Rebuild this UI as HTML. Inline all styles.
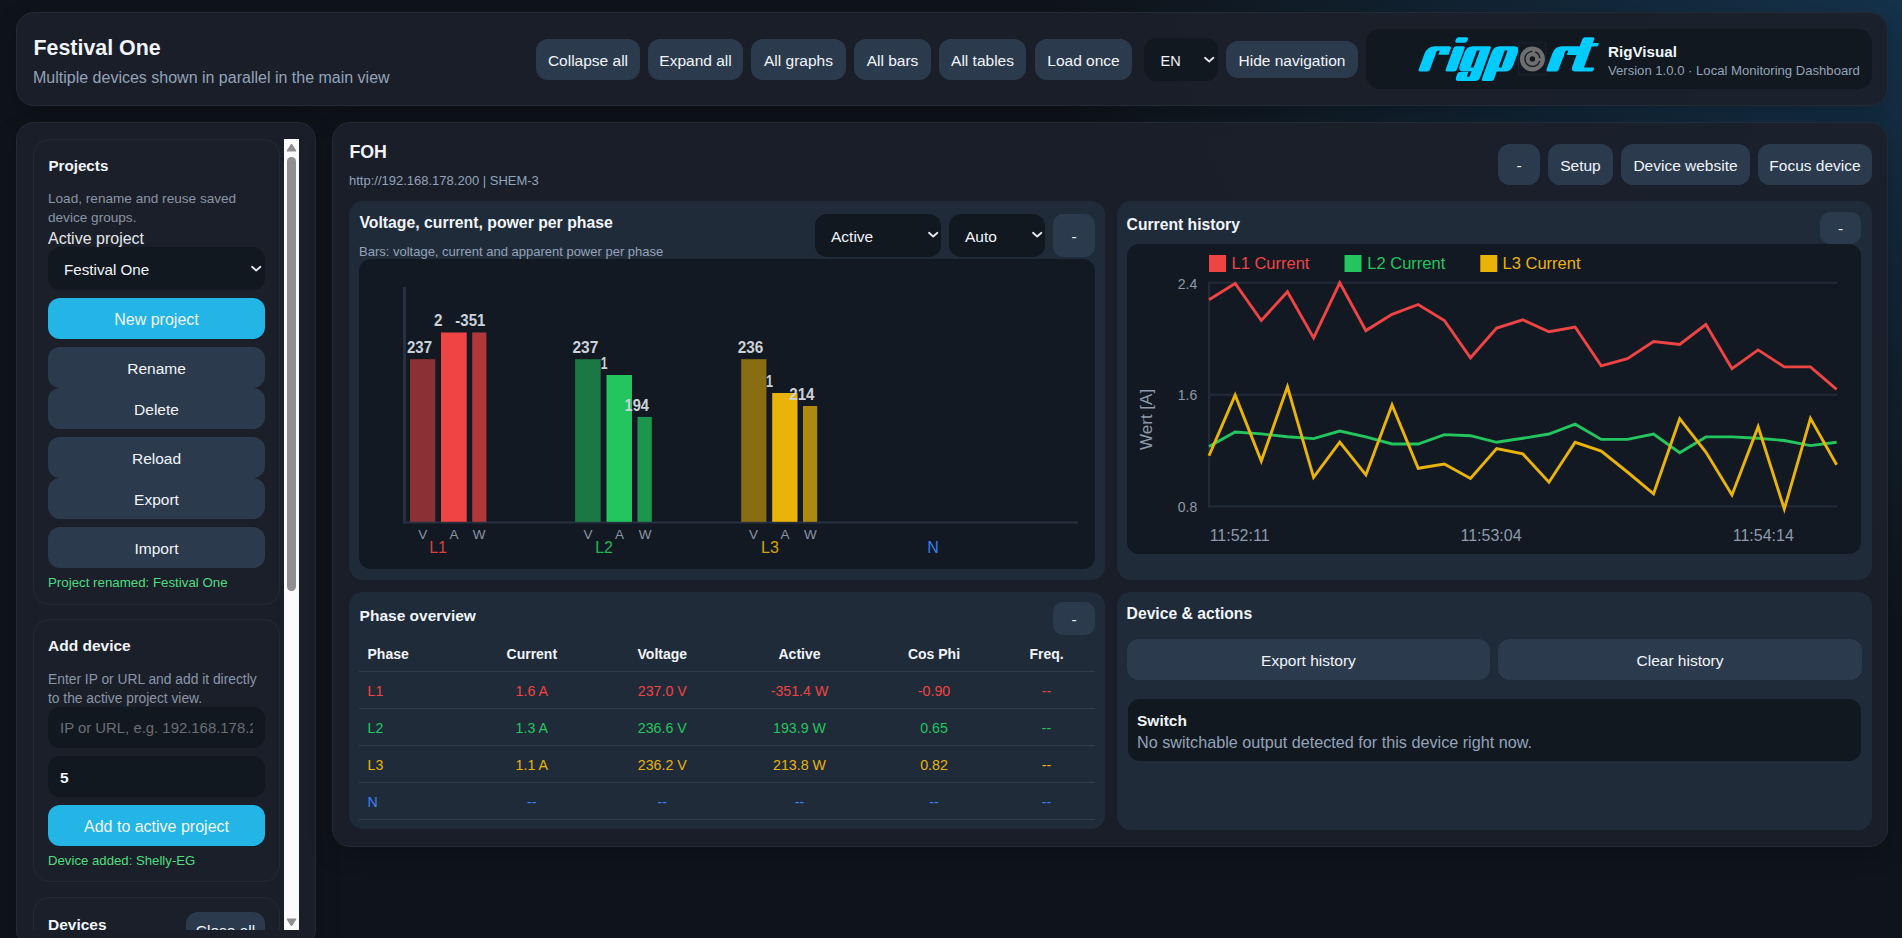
<!DOCTYPE html>
<html><head><meta charset="utf-8"><style>
html,body{margin:0;padding:0;}
body{width:1902px;height:938px;overflow:hidden;position:relative;font-family:"Liberation Sans", sans-serif;
background:radial-gradient(ellipse 850px 620px at 1902px 0px, rgba(25,75,115,0.55), rgba(25,75,115,0) 100%), #0f141a;}
</style></head><body>
<div style="position:absolute;left:16px;top:12px;width:1872px;height:94px;background:rgba(27,32,42,0.92);border-radius:18px;box-sizing:border-box;border:1px solid #222b36;box-shadow:0 8px 24px rgba(0,0,0,0.18);"></div>
<div style="position:absolute;left:33.5px;top:38.28px;font-size:21.4px;line-height:21.4px;font-weight:700;color:#f1f5f9;white-space:nowrap;">Festival One</div>
<div style="position:absolute;left:33px;top:70.26px;font-size:16px;line-height:16px;font-weight:400;color:#94a3b8;white-space:nowrap;">Multiple devices shown in parallel in the main view</div>
<div style="position:absolute;left:536px;top:39px;width:104px;height:41px;background:#2c3a4e;border-radius:12px;"></div>
<div style="position:absolute;left:188.0px;width:800px;text-align:center;top:53.38px;font-size:15.5px;line-height:15.5px;font-weight:400;color:#f1f5f9;white-space:nowrap;">Collapse all</div>
<div style="position:absolute;left:648px;top:39px;width:95px;height:41px;background:#2c3a4e;border-radius:12px;"></div>
<div style="position:absolute;left:295.5px;width:800px;text-align:center;top:53.38px;font-size:15.5px;line-height:15.5px;font-weight:400;color:#f1f5f9;white-space:nowrap;">Expand all</div>
<div style="position:absolute;left:751px;top:39px;width:95px;height:41px;background:#2c3a4e;border-radius:12px;"></div>
<div style="position:absolute;left:398.5px;width:800px;text-align:center;top:53.38px;font-size:15.5px;line-height:15.5px;font-weight:400;color:#f1f5f9;white-space:nowrap;">All graphs</div>
<div style="position:absolute;left:854px;top:39px;width:77px;height:41px;background:#2c3a4e;border-radius:12px;"></div>
<div style="position:absolute;left:492.5px;width:800px;text-align:center;top:53.38px;font-size:15.5px;line-height:15.5px;font-weight:400;color:#f1f5f9;white-space:nowrap;">All bars</div>
<div style="position:absolute;left:939px;top:39px;width:87px;height:41px;background:#2c3a4e;border-radius:12px;"></div>
<div style="position:absolute;left:582.5px;width:800px;text-align:center;top:53.38px;font-size:15.5px;line-height:15.5px;font-weight:400;color:#f1f5f9;white-space:nowrap;">All tables</div>
<div style="position:absolute;left:1035px;top:39px;width:97px;height:41px;background:#2c3a4e;border-radius:12px;"></div>
<div style="position:absolute;left:683.5px;width:800px;text-align:center;top:53.38px;font-size:15.5px;line-height:15.5px;font-weight:400;color:#f1f5f9;white-space:nowrap;">Load once</div>
<div style="position:absolute;left:1144px;top:38px;width:74px;height:43px;background:#111820;border-radius:12px;"></div>
<div style="position:absolute;left:1160.5px;top:54.23px;font-size:14.5px;line-height:14.5px;font-weight:400;color:#f1f5f9;white-space:nowrap;">EN</div>
<svg style="position:absolute;left:1203.3px;top:53.3px" width="12.4" height="12.4"><path d="M2 4.73 L6.2 8.510000000000002 L10.4 4.73" fill="none" stroke="#e5e7eb" stroke-width="1.8" stroke-linecap="round" stroke-linejoin="round"/></svg>
<div style="position:absolute;left:1226px;top:41px;width:132px;height:37px;background:#2c3a4e;border-radius:12px;"></div>
<div style="position:absolute;left:892px;width:800px;text-align:center;top:53.38px;font-size:15.5px;line-height:15.5px;font-weight:400;color:#f1f5f9;white-space:nowrap;">Hide navigation</div>
<div style="position:absolute;left:1366px;top:29px;width:506px;height:60px;background:#111820;border-radius:14px;"></div>
<div style="position:absolute;left:1608px;top:44.13px;font-size:15.2px;line-height:15.2px;font-weight:700;color:#f1f5f9;white-space:nowrap;">RigVisual</div>
<div style="position:absolute;left:1608px;top:63.61px;font-size:13.1px;line-height:13.1px;font-weight:400;color:#94a3b8;white-space:nowrap;">Version 1.0.0 · Local Monitoring Dashboard</div>
<svg style="position:absolute;left:1400px;top:30px" width="230" height="60"><g transform="skewX(-20)"><path d="M 33.08,39.60 L 33.08,24.20 Q 33.08,16.20 41.08,16.20 L 55.08,16.20 Q 57.58,16.20 57.58,18.70 L 57.58,24.80 L 47.58,24.80 Q 44.38,24.80 44.38,28.00 L 44.38,39.60 Q 44.38,41.60 42.38,41.60 L 35.08,41.60 Q 33.08,41.60 33.08,39.60 Z" fill="#00ccff"/><rect x="44.38" y="20.50" width="3.00" height="5.50" rx="1.2" fill="#111820"/><rect x="60.08" y="16.20" width="11.20" height="25.40" rx="2" fill="#00ccff"/><rect x="59.28" y="7.20" width="12.00" height="5.50" rx="2" fill="#00ccff"/><path d="M 72.68,35.60 L 72.68,22.20 Q 72.68,16.20 78.68,16.20 L 95.08,16.20 Q 97.48,16.20 97.48,18.60 L 97.48,47.00 Q 97.48,51.00 93.48,51.00 L 77.08,51.00 Q 73.28,51.00 73.28,47.00 L 73.28,43.50 Q 73.28,42.00 74.78,42.00 L 83.68,42.00 L 83.68,41.60 L 78.68,41.60 Q 72.68,41.60 72.68,35.60 Z" fill="#00ccff"/><rect x="84.28" y="20.50" width="3.00" height="17.10" rx="0" fill="#111820"/><rect x="83.68" y="41.20" width="2.80" height="5.60" rx="0" fill="#111820"/><path d="M 99.68,41.60 L 99.68,22.20 Q 99.68,16.20 105.68,16.20 L 120.08,16.20 Q 126.08,16.20 126.08,22.20 L 126.08,35.60 Q 126.08,41.60 120.08,41.60 L 111.88,41.60 L 111.88,49.00 Q 111.88,51.00 109.88,51.00 L 101.68,51.00 Q 99.68,51.00 99.68,49.00 Z" fill="#00ccff"/><rect x="112.18" y="20.50" width="2.90" height="17.10" rx="0" fill="#111820"/><path d="M 160.88,39.60 L 160.88,23.20 Q 160.88,16.20 167.88,16.20 L 186.58,16.20 L 186.58,24.90 L 176.08,24.90 Q 173.08,24.90 173.08,28.00 L 173.08,39.60 Q 173.08,41.60 171.08,41.60 L 162.88,41.60 Q 160.88,41.60 160.88,39.60 Z" fill="#00ccff"/><rect x="173.08" y="20.40" width="2.80" height="5.60" rx="1.2" fill="#111820"/><path d="M 185.68,36.60 L 185.68,9.20 Q 185.68,7.20 187.68,7.20 L 195.58,7.20 Q 197.58,7.20 197.58,9.20 L 197.58,13.00 L 202.58,13.00 Q 203.88,13.00 203.88,14.30 L 203.88,15.10 Q 203.88,16.40 202.58,16.40 L 197.58,16.40 L 197.58,37.40 L 206.58,37.40 Q 208.08,37.40 208.08,38.90 L 208.08,40.20 Q 208.08,41.60 206.58,41.60 L 190.68,41.60 Q 185.68,41.60 185.68,36.60 Z" fill="#00ccff"/></g><rect x="118.5" y="13" width="27.3" height="31.7" fill="none" stroke="#1d2530" stroke-width="1"/><circle cx="132.4000000000001" cy="28.9" r="12.5" fill="#6e6e6e"/><circle cx="132.4000000000001" cy="28.9" r="7.5" fill="none" stroke="#111820" stroke-width="1.3" stroke-dasharray="33 3 8 3" stroke-dashoffset="-2"/><circle cx="132.4000000000001" cy="28.9" r="2.7" fill="#111820"/></svg>
<div style="position:absolute;left:16px;top:122px;width:300px;height:826px;background:rgba(27,32,42,0.92);border-radius:18px;box-sizing:border-box;border:1px solid #222b36;box-shadow:0 8px 24px rgba(0,0,0,0.18);"></div>
<div style="position:absolute;left:0;top:139px;width:284px;height:791px;overflow:hidden;">
<div style="position:absolute;left:33px;top:0px;width:247px;height:466px;background:#1a1f29;border-radius:16px;box-sizing:border-box;border:1px solid #222a35;"></div>
<div style="position:absolute;left:48.4px;top:19.13px;font-size:15.2px;line-height:15.2px;font-weight:700;color:#f1f5f9;white-space:nowrap;">Projects</div>
<div style="position:absolute;left:48px;top:53.49px;font-size:13.6px;line-height:13.6px;font-weight:400;color:#8b95a7;white-space:nowrap;">Load, rename and reuse saved</div>
<div style="position:absolute;left:48px;top:72.49px;font-size:13.6px;line-height:13.6px;font-weight:400;color:#8b95a7;white-space:nowrap;">device groups.</div>
<div style="position:absolute;left:48px;top:91.76px;font-size:16px;line-height:16px;font-weight:400;color:#e5e7eb;white-space:nowrap;">Active project</div>
<div style="position:absolute;left:48px;top:108px;width:217px;height:43px;background:#111820;border-radius:12px;"></div>
<div style="position:absolute;left:64px;top:123.13px;font-size:15.2px;line-height:15.2px;font-weight:400;color:#f1f5f9;white-space:nowrap;">Festival One</div>
<div style="position:absolute;left:48px;top:159px;width:217px;height:41px;background:#22b5e5;border-radius:12px;"></div>
<div style="position:absolute;left:-243.5px;width:800px;text-align:center;top:172.76px;font-size:16px;line-height:16px;font-weight:400;color:#f1f5f9;white-space:nowrap;">New project</div>
<div style="position:absolute;left:48px;top:208px;width:217px;height:41px;background:#2c3a4e;border-radius:12px;"></div>
<div style="position:absolute;left:-243.5px;width:800px;text-align:center;top:221.88px;font-size:15.5px;line-height:15.5px;font-weight:400;color:#f1f5f9;white-space:nowrap;">Rename</div>
<div style="position:absolute;left:48px;top:249px;width:217px;height:41px;background:#2c3a4e;border-radius:12px;"></div>
<div style="position:absolute;left:-243.5px;width:800px;text-align:center;top:262.88px;font-size:15.5px;line-height:15.5px;font-weight:400;color:#f1f5f9;white-space:nowrap;">Delete</div>
<div style="position:absolute;left:48px;top:298px;width:217px;height:41px;background:#2c3a4e;border-radius:12px;"></div>
<div style="position:absolute;left:-243.5px;width:800px;text-align:center;top:311.88px;font-size:15.5px;line-height:15.5px;font-weight:400;color:#f1f5f9;white-space:nowrap;">Reload</div>
<div style="position:absolute;left:48px;top:339px;width:217px;height:41px;background:#2c3a4e;border-radius:12px;"></div>
<div style="position:absolute;left:-243.5px;width:800px;text-align:center;top:352.88px;font-size:15.5px;line-height:15.5px;font-weight:400;color:#f1f5f9;white-space:nowrap;">Export</div>
<div style="position:absolute;left:48px;top:388px;width:217px;height:41px;background:#2c3a4e;border-radius:12px;"></div>
<div style="position:absolute;left:-243.5px;width:800px;text-align:center;top:401.88px;font-size:15.5px;line-height:15.5px;font-weight:400;color:#f1f5f9;white-space:nowrap;">Import</div>
<div style="position:absolute;left:48px;top:436.74px;font-size:13.3px;line-height:13.3px;font-weight:400;color:#4ade80;white-space:nowrap;">Project renamed: Festival One</div>
<div style="position:absolute;left:33px;top:480px;width:247px;height:263px;background:#1a1f29;border-radius:16px;box-sizing:border-box;border:1px solid #222a35;"></div>
<div style="position:absolute;left:48px;top:498.88px;font-size:15.5px;line-height:15.5px;font-weight:700;color:#f1f5f9;white-space:nowrap;">Add device</div>
<div style="position:absolute;left:48px;top:534.22px;font-size:13.8px;line-height:13.8px;font-weight:400;color:#8b95a7;white-space:nowrap;">Enter IP or URL and add it directly</div>
<div style="position:absolute;left:48px;top:553.02px;font-size:13.8px;line-height:13.8px;font-weight:400;color:#8b95a7;white-space:nowrap;">to the active project view.</div>
<div style="position:absolute;left:48px;top:568px;width:217px;height:41px;background:#111820;border-radius:12px;"></div>
<div style="position:absolute;left:60px;top:582.39px;width:193.3px;overflow:hidden;font-size:14.9px;line-height:14.9px;color:#6b6e74;white-space:nowrap;">IP or URL, e.g. 192.168.178.200</div>
<div style="position:absolute;left:48px;top:617px;width:217px;height:41px;background:#111820;border-radius:12px;"></div>
<div style="position:absolute;left:60px;top:630.88px;font-size:15.5px;line-height:15.5px;font-weight:700;color:#f1f5f9;white-space:nowrap;">5</div>
<div style="position:absolute;left:48px;top:666px;width:217px;height:41px;background:#22b5e5;border-radius:12px;"></div>
<div style="position:absolute;left:-243.5px;width:800px;text-align:center;top:680.26px;font-size:16px;line-height:16px;font-weight:400;color:#f1f5f9;white-space:nowrap;">Add to active project</div>
<div style="position:absolute;left:48px;top:714.83px;font-size:13.2px;line-height:13.2px;font-weight:400;color:#4ade80;white-space:nowrap;">Device added: Shelly-EG</div>
<div style="position:absolute;left:33px;top:758px;width:247px;height:203px;background:#1a1f29;border-radius:16px;box-sizing:border-box;border:1px solid #222a35;"></div>
<div style="position:absolute;left:48px;top:777.88px;font-size:15.5px;line-height:15.5px;font-weight:700;color:#f1f5f9;white-space:nowrap;">Devices</div>
<div style="position:absolute;left:186px;top:773px;width:79px;height:41px;background:#2c3a4e;border-radius:12px;"></div>
<div style="position:absolute;left:-174.5px;width:800px;text-align:center;top:783.88px;font-size:15.5px;line-height:15.5px;font-weight:400;color:#f1f5f9;white-space:nowrap;">Close all</div>
</div>
<svg style="position:absolute;left:250.3px;top:262.3px" width="12.4" height="12.4"><path d="M2 4.73 L6.2 8.510000000000002 L10.4 4.73" fill="none" stroke="#e5e7eb" stroke-width="1.8" stroke-linecap="round" stroke-linejoin="round"/></svg>
<div style="position:absolute;left:284px;top:139px;width:15px;height:791px;background:#fbfbfb;border-radius:0px;"></div>
<svg style="position:absolute;left:284px;top:139px" width="15" height="791"><path d="M3 12 L7.5 5 L12 12 Z" fill="#8f8f8f" stroke="#8f8f8f" stroke-width="1" stroke-linejoin="round"/><path d="M3 780 L7.5 787 L12 780 Z" fill="#8f8f8f" stroke="#8f8f8f" stroke-width="1" stroke-linejoin="round"/></svg>
<div style="position:absolute;left:287px;top:157px;width:9px;height:434px;background:#8f8f8f;border-radius:4.5px;"></div>
<div style="position:absolute;left:332px;top:122px;width:1556px;height:725px;background:rgba(27,32,42,0.92);border-radius:18px;box-sizing:border-box;border:1px solid #222b36;box-shadow:0 8px 24px rgba(0,0,0,0.18);"></div>
<div style="position:absolute;left:349.4px;top:144.43px;font-size:17.8px;line-height:17.8px;font-weight:700;color:#f1f5f9;white-space:nowrap;">FOH</div>
<div style="position:absolute;left:349px;top:174.00px;font-size:13px;line-height:13px;font-weight:400;color:#94a3b8;white-space:nowrap;">http://192.168.178.200 | SHEM-3</div>
<div style="position:absolute;left:1498px;top:144px;width:42px;height:41px;background:#2c3a4e;border-radius:12px;"></div>
<div style="position:absolute;left:1119.0px;width:800px;text-align:center;top:158.08px;font-size:15.5px;line-height:15.5px;font-weight:400;color:#f1f5f9;white-space:nowrap;">-</div>
<div style="position:absolute;left:1548px;top:144px;width:65px;height:41px;background:#2c3a4e;border-radius:12px;"></div>
<div style="position:absolute;left:1180.5px;width:800px;text-align:center;top:158.08px;font-size:15.5px;line-height:15.5px;font-weight:400;color:#f1f5f9;white-space:nowrap;">Setup</div>
<div style="position:absolute;left:1621px;top:144px;width:129px;height:41px;background:#2c3a4e;border-radius:12px;"></div>
<div style="position:absolute;left:1285.5px;width:800px;text-align:center;top:158.08px;font-size:15.5px;line-height:15.5px;font-weight:400;color:#f1f5f9;white-space:nowrap;">Device website</div>
<div style="position:absolute;left:1758px;top:144px;width:114px;height:41px;background:#2c3a4e;border-radius:12px;"></div>
<div style="position:absolute;left:1415.0px;width:800px;text-align:center;top:158.08px;font-size:15.5px;line-height:15.5px;font-weight:400;color:#f1f5f9;white-space:nowrap;">Focus device</div>
<div style="position:absolute;left:349px;top:201px;width:756px;height:379px;background:#202b3a;border-radius:14px;"></div>
<div style="position:absolute;left:359.4px;top:215.43px;font-size:15.8px;line-height:15.8px;font-weight:700;color:#f1f5f9;white-space:nowrap;">Voltage, current, power per phase</div>
<div style="position:absolute;left:359px;top:244.80px;font-size:13px;line-height:13px;font-weight:400;color:#94a3b8;white-space:nowrap;">Bars: voltage, current and apparent power per phase</div>
<div style="position:absolute;left:815px;top:214px;width:126px;height:43px;background:#111820;border-radius:12px;"></div>
<div style="position:absolute;left:831px;top:228.68px;font-size:15.5px;line-height:15.5px;font-weight:400;color:#f1f5f9;white-space:nowrap;">Active</div>
<svg style="position:absolute;left:926.8px;top:228.3px" width="12.4" height="12.4"><path d="M2 4.73 L6.2 8.510000000000002 L10.4 4.73" fill="none" stroke="#e5e7eb" stroke-width="1.8" stroke-linecap="round" stroke-linejoin="round"/></svg>
<div style="position:absolute;left:949px;top:214px;width:96px;height:43px;background:#111820;border-radius:12px;"></div>
<div style="position:absolute;left:965px;top:228.68px;font-size:15.5px;line-height:15.5px;font-weight:400;color:#f1f5f9;white-space:nowrap;">Auto</div>
<svg style="position:absolute;left:1030.8px;top:228.3px" width="12.4" height="12.4"><path d="M2 4.73 L6.2 8.510000000000002 L10.4 4.73" fill="none" stroke="#e5e7eb" stroke-width="1.8" stroke-linecap="round" stroke-linejoin="round"/></svg>
<div style="position:absolute;left:1053px;top:214px;width:42px;height:43px;background:#2c3a4e;border-radius:10px;"></div>
<div style="position:absolute;left:674px;width:800px;text-align:center;top:228.68px;font-size:15.5px;line-height:15.5px;font-weight:400;color:#f1f5f9;white-space:nowrap;">-</div>
<div style="position:absolute;left:359px;top:259px;width:736px;height:310px;background:#121923;border-radius:12px;"></div>

<div style="position:absolute;left:1117px;top:201px;width:755px;height:379px;background:#202b3a;border-radius:14px;"></div>
<div style="position:absolute;left:1126.6px;top:217.21px;font-size:15.7px;line-height:15.7px;font-weight:700;color:#f1f5f9;white-space:nowrap;">Current history</div>
<div style="position:absolute;left:1820px;top:212px;width:41px;height:32px;background:#2c3a4e;border-radius:10px;"></div>
<div style="position:absolute;left:1440.5px;width:800px;text-align:center;top:220.88px;font-size:15.5px;line-height:15.5px;font-weight:400;color:#f1f5f9;white-space:nowrap;">-</div>
<div style="position:absolute;left:1127px;top:244px;width:734px;height:310px;background:#121923;border-radius:12px;"></div>

<svg style="position:absolute;left:359px;top:259px" width="736" height="310" font-family='"Liberation Sans", sans-serif'><rect x="44" y="28" width="3" height="236.5" fill="#263140"/><rect x="44" y="262.5" width="675" height="2" fill="#263140"/><rect x="51" y="100.19999999999999" width="25.30000000000001" height="162.59999999999997" fill="rgba(239,68,68,0.55)"/><rect x="82" y="73.5" width="25.69999999999999" height="189.29999999999995" fill="#ef4444"/><rect x="113.19999999999999" y="73.5" width="14.199999999999989" height="189.29999999999995" fill="rgba(239,68,68,0.72)"/><rect x="216.10000000000002" y="100.19999999999999" width="25.600000000000023" height="162.59999999999997" fill="rgba(34,197,94,0.55)"/><rect x="247.5" y="116" width="25.5" height="146.79999999999995" fill="#22c55e"/><rect x="278.5" y="157.89999999999998" width="14.299999999999955" height="104.89999999999998" fill="rgba(34,197,94,0.72)"/><rect x="382.20000000000005" y="100.19999999999999" width="25.199999999999932" height="162.59999999999997" fill="rgba(234,179,8,0.55)"/><rect x="413.20000000000005" y="134" width="25.299999999999955" height="128.79999999999995" fill="#eab308"/><rect x="444" y="147" width="14.200000000000045" height="115.79999999999995" fill="rgba(234,179,8,0.72)"/><text x="60.5" y="94" font-size="16.2" font-weight="700" fill="#cdd2d9" text-anchor="middle" textLength="25.0" lengthAdjust="spacingAndGlyphs">237</text><text x="79.25" y="67.19999999999999" font-size="16.2" font-weight="700" fill="#cdd2d9" text-anchor="middle" textLength="8.5" lengthAdjust="spacingAndGlyphs">2</text><text x="111.35000000000002" y="67.19999999999999" font-size="16.2" font-weight="700" fill="#cdd2d9" text-anchor="middle" textLength="30.1" lengthAdjust="spacingAndGlyphs">-351</text><text x="226.3499999999999" y="94" font-size="16.2" font-weight="700" fill="#cdd2d9" text-anchor="middle" textLength="25.9" lengthAdjust="spacingAndGlyphs">237</text><text x="245.10000000000002" y="109.5" font-size="16.2" font-weight="700" fill="#cdd2d9" text-anchor="middle" textLength="6.8" lengthAdjust="spacingAndGlyphs">1</text><text x="277.79999999999995" y="151.8" font-size="16.2" font-weight="700" fill="#cdd2d9" text-anchor="middle" textLength="24.4" lengthAdjust="spacingAndGlyphs">194</text><text x="391.5999999999999" y="94" font-size="16.2" font-weight="700" fill="#cdd2d9" text-anchor="middle" textLength="25.6" lengthAdjust="spacingAndGlyphs">236</text><text x="410.5" y="127.80000000000001" font-size="16.2" font-weight="700" fill="#cdd2d9" text-anchor="middle" textLength="7.0" lengthAdjust="spacingAndGlyphs">1</text><text x="442.9" y="140.60000000000002" font-size="16.2" font-weight="700" fill="#cdd2d9" text-anchor="middle" textLength="25.2" lengthAdjust="spacingAndGlyphs">214</text><text x="63.69999999999999" y="279.70000000000005" font-size="13.5" font-weight="400" fill="#8a94a6" text-anchor="middle" >V</text><text x="94.89999999999998" y="279.70000000000005" font-size="13.5" font-weight="400" fill="#8a94a6" text-anchor="middle" >A</text><text x="120.19999999999999" y="279.70000000000005" font-size="13.5" font-weight="400" fill="#8a94a6" text-anchor="middle" >W</text><text x="229" y="279.70000000000005" font-size="13.5" font-weight="400" fill="#8a94a6" text-anchor="middle" >V</text><text x="260.4" y="279.70000000000005" font-size="13.5" font-weight="400" fill="#8a94a6" text-anchor="middle" >A</text><text x="286" y="279.70000000000005" font-size="13.5" font-weight="400" fill="#8a94a6" text-anchor="middle" >W</text><text x="394.5" y="279.70000000000005" font-size="13.5" font-weight="400" fill="#8a94a6" text-anchor="middle" >V</text><text x="425.9" y="279.70000000000005" font-size="13.5" font-weight="400" fill="#8a94a6" text-anchor="middle" >A</text><text x="451.4" y="279.70000000000005" font-size="13.5" font-weight="400" fill="#8a94a6" text-anchor="middle" >W</text><text x="79.10000000000002" y="293.9" font-size="16" font-weight="400" fill="#dc3f3f" text-anchor="middle" >L1</text><text x="245.10000000000002" y="293.9" font-size="16" font-weight="400" fill="#1fb455" text-anchor="middle" >L2</text><text x="410.9" y="293.9" font-size="16" font-weight="400" fill="#d6a30a" text-anchor="middle" >L3</text><text x="574" y="293.9" font-size="16" font-weight="400" fill="#3b7fe8" text-anchor="middle" >N</text></svg>
<svg style="position:absolute;left:1127px;top:244px" width="734" height="310" font-family='"Liberation Sans", sans-serif'><rect x="82" y="37.69999999999999" width="628" height="2.2" fill="#202a38"/><rect x="82" y="149.7" width="628" height="2.2" fill="#202a38"/><rect x="82" y="261.29999999999995" width="628" height="2.2" fill="#202a38"/><rect x="81" y="37.69999999999999" width="2.2" height="225.8" fill="#202a38"/><polyline points="82.00,55.80 108.15,39.50 134.30,76.50 160.45,47.80 186.60,93.90 212.75,38.80 238.90,86.60 265.05,70.30 291.20,60.50 317.35,76.50 343.50,113.80 369.65,84.10 395.80,75.80 421.95,87.70 448.10,83.00 474.25,121.80 500.40,114.60 526.55,97.50 552.70,100.40 578.85,80.50 605.00,124.70 631.15,105.90 657.30,122.90 683.45,122.90 709.60,145.40" fill="none" stroke="#ef4444" stroke-width="2.9" stroke-linejoin="miter" stroke-miterlimit="4"/><polyline points="82.00,202.60 108.15,188.10 134.30,189.90 160.45,192.80 186.60,194.60 212.75,187.00 238.90,192.80 265.05,200.00 291.20,200.00 317.35,190.60 343.50,191.70 369.65,198.30 395.80,194.30 421.95,190.00 448.10,180.20 474.25,195.40 500.40,195.40 526.55,190.00 552.70,208.80 578.85,192.90 605.00,192.90 631.15,194.30 657.30,196.50 683.45,201.60 709.60,198.30" fill="none" stroke="#22c55e" stroke-width="2.9" stroke-linejoin="miter" stroke-miterlimit="4"/><polyline points="82.00,211.70 108.15,151.10 134.30,217.10 160.45,142.80 186.60,233.40 212.75,198.20 238.90,230.90 265.05,160.90 291.20,224.30 317.35,220.00 343.50,234.50 369.65,204.50 395.80,209.90 421.95,238.20 448.10,198.30 474.25,207.00 500.40,228.00 526.55,249.80 552.70,174.70 578.85,208.10 605.00,250.90 631.15,182.70 657.30,265.00 683.45,174.40 709.60,220.80" fill="none" stroke="#eab308" stroke-width="2.9" stroke-linejoin="miter" stroke-miterlimit="4"/><rect x="82" y="11" width="17" height="17" fill="#ef4444"/><text x="104.5" y="25.30000000000001" font-size="16.5" font-weight="400" fill="#ef4444" text-anchor="start" >L1 Current</text><rect x="217.5" y="11" width="17" height="17" fill="#22c55e"/><text x="240.29999999999995" y="25.30000000000001" font-size="16.5" font-weight="400" fill="#22c55e" text-anchor="start" >L2 Current</text><rect x="353.29999999999995" y="11" width="17" height="17" fill="#eab308"/><text x="375.5999999999999" y="25.30000000000001" font-size="16.5" font-weight="400" fill="#eab308" text-anchor="start" >L3 Current</text><text x="70.29999999999995" y="44.80000000000001" font-size="14" font-weight="400" fill="#8f99aa" text-anchor="end" >2.4</text><text x="70.29999999999995" y="156" font-size="14" font-weight="400" fill="#8f99aa" text-anchor="end" >1.6</text><text x="70.29999999999995" y="267.6" font-size="14" font-weight="400" fill="#8f99aa" text-anchor="end" >0.8</text><text x="112.59999999999991" y="296.79999999999995" font-size="16" font-weight="400" fill="#8f99aa" text-anchor="middle" >11:52:11</text><text x="364" y="296.79999999999995" font-size="16" font-weight="400" fill="#8f99aa" text-anchor="middle" >11:53:04</text><text x="636.3" y="296.79999999999995" font-size="16" font-weight="400" fill="#8f99aa" text-anchor="middle" >11:54:14</text><text transform="translate(24.5,175.39999999999998) rotate(-90)" font-size="17" fill="#8f99aa" text-anchor="middle">Wert [A]</text></svg>
<div style="position:absolute;left:349px;top:592px;width:756px;height:237px;background:#202b3a;border-radius:14px;"></div>
<div style="position:absolute;left:359.6px;top:608.08px;font-size:15.5px;line-height:15.5px;font-weight:700;color:#f1f5f9;white-space:nowrap;">Phase overview</div>
<div style="position:absolute;left:1053px;top:602px;width:42px;height:33px;background:#2c3a4e;border-radius:10px;"></div>
<div style="position:absolute;left:674px;width:800px;text-align:center;top:611.88px;font-size:15.5px;line-height:15.5px;font-weight:400;color:#f1f5f9;white-space:nowrap;">-</div>
<div style="position:absolute;left:367.5px;top:647.15px;font-size:14px;line-height:14px;font-weight:700;color:#f1f5f9;white-space:nowrap;">Phase</div>
<div style="position:absolute;left:131.79999999999995px;width:800px;text-align:center;top:647.15px;font-size:14px;line-height:14px;font-weight:700;color:#f1f5f9;white-space:nowrap;">Current</div>
<div style="position:absolute;left:262.29999999999995px;width:800px;text-align:center;top:647.15px;font-size:14px;line-height:14px;font-weight:700;color:#f1f5f9;white-space:nowrap;">Voltage</div>
<div style="position:absolute;left:399.5px;width:800px;text-align:center;top:647.15px;font-size:14px;line-height:14px;font-weight:700;color:#f1f5f9;white-space:nowrap;">Active</div>
<div style="position:absolute;left:534px;width:800px;text-align:center;top:647.15px;font-size:14px;line-height:14px;font-weight:700;color:#f1f5f9;white-space:nowrap;">Cos Phi</div>
<div style="position:absolute;left:646.5px;width:800px;text-align:center;top:647.15px;font-size:14px;line-height:14px;font-weight:700;color:#f1f5f9;white-space:nowrap;">Freq.</div>
<div style="position:absolute;left:359px;top:671px;width:736px;height:1px;background:rgba(148,163,184,0.14);border-radius:0px;"></div>
<div style="position:absolute;left:359px;top:708px;width:736px;height:1px;background:rgba(148,163,184,0.14);border-radius:0px;"></div>
<div style="position:absolute;left:359px;top:745px;width:736px;height:1px;background:rgba(148,163,184,0.14);border-radius:0px;"></div>
<div style="position:absolute;left:359px;top:782px;width:736px;height:1px;background:rgba(148,163,184,0.14);border-radius:0px;"></div>
<div style="position:absolute;left:359px;top:819px;width:736px;height:1px;background:rgba(148,163,184,0.14);border-radius:0px;"></div>
<div style="position:absolute;left:367.5px;top:683.98px;font-size:14.2px;line-height:14.2px;font-weight:400;color:#ef4444;white-space:nowrap;">L1</div>
<div style="position:absolute;left:131.79999999999995px;width:800px;text-align:center;top:683.98px;font-size:14.2px;line-height:14.2px;font-weight:400;color:#ef4444;white-space:nowrap;">1.6 A</div>
<div style="position:absolute;left:262.29999999999995px;width:800px;text-align:center;top:683.98px;font-size:14.2px;line-height:14.2px;font-weight:400;color:#ef4444;white-space:nowrap;">237.0 V</div>
<div style="position:absolute;left:399.5px;width:800px;text-align:center;top:683.98px;font-size:14.2px;line-height:14.2px;font-weight:400;color:#ef4444;white-space:nowrap;">-351.4 W</div>
<div style="position:absolute;left:534px;width:800px;text-align:center;top:683.98px;font-size:14.2px;line-height:14.2px;font-weight:400;color:#ef4444;white-space:nowrap;">-0.90</div>
<div style="position:absolute;left:646.5px;width:800px;text-align:center;top:683.98px;font-size:14.2px;line-height:14.2px;font-weight:400;color:#ef4444;white-space:nowrap;">--</div>
<div style="position:absolute;left:367.5px;top:720.98px;font-size:14.2px;line-height:14.2px;font-weight:400;color:#22c55e;white-space:nowrap;">L2</div>
<div style="position:absolute;left:131.79999999999995px;width:800px;text-align:center;top:720.98px;font-size:14.2px;line-height:14.2px;font-weight:400;color:#22c55e;white-space:nowrap;">1.3 A</div>
<div style="position:absolute;left:262.29999999999995px;width:800px;text-align:center;top:720.98px;font-size:14.2px;line-height:14.2px;font-weight:400;color:#22c55e;white-space:nowrap;">236.6 V</div>
<div style="position:absolute;left:399.5px;width:800px;text-align:center;top:720.98px;font-size:14.2px;line-height:14.2px;font-weight:400;color:#22c55e;white-space:nowrap;">193.9 W</div>
<div style="position:absolute;left:534px;width:800px;text-align:center;top:720.98px;font-size:14.2px;line-height:14.2px;font-weight:400;color:#22c55e;white-space:nowrap;">0.65</div>
<div style="position:absolute;left:646.5px;width:800px;text-align:center;top:720.98px;font-size:14.2px;line-height:14.2px;font-weight:400;color:#22c55e;white-space:nowrap;">--</div>
<div style="position:absolute;left:367.5px;top:757.98px;font-size:14.2px;line-height:14.2px;font-weight:400;color:#eab308;white-space:nowrap;">L3</div>
<div style="position:absolute;left:131.79999999999995px;width:800px;text-align:center;top:757.98px;font-size:14.2px;line-height:14.2px;font-weight:400;color:#eab308;white-space:nowrap;">1.1 A</div>
<div style="position:absolute;left:262.29999999999995px;width:800px;text-align:center;top:757.98px;font-size:14.2px;line-height:14.2px;font-weight:400;color:#eab308;white-space:nowrap;">236.2 V</div>
<div style="position:absolute;left:399.5px;width:800px;text-align:center;top:757.98px;font-size:14.2px;line-height:14.2px;font-weight:400;color:#eab308;white-space:nowrap;">213.8 W</div>
<div style="position:absolute;left:534px;width:800px;text-align:center;top:757.98px;font-size:14.2px;line-height:14.2px;font-weight:400;color:#eab308;white-space:nowrap;">0.82</div>
<div style="position:absolute;left:646.5px;width:800px;text-align:center;top:757.98px;font-size:14.2px;line-height:14.2px;font-weight:400;color:#eab308;white-space:nowrap;">--</div>
<div style="position:absolute;left:367.5px;top:794.98px;font-size:14.2px;line-height:14.2px;font-weight:400;color:#3b82f6;white-space:nowrap;">N</div>
<div style="position:absolute;left:131.79999999999995px;width:800px;text-align:center;top:794.98px;font-size:14.2px;line-height:14.2px;font-weight:400;color:#3b82f6;white-space:nowrap;">--</div>
<div style="position:absolute;left:262.29999999999995px;width:800px;text-align:center;top:794.98px;font-size:14.2px;line-height:14.2px;font-weight:400;color:#3b82f6;white-space:nowrap;">--</div>
<div style="position:absolute;left:399.5px;width:800px;text-align:center;top:794.98px;font-size:14.2px;line-height:14.2px;font-weight:400;color:#3b82f6;white-space:nowrap;">--</div>
<div style="position:absolute;left:534px;width:800px;text-align:center;top:794.98px;font-size:14.2px;line-height:14.2px;font-weight:400;color:#3b82f6;white-space:nowrap;">--</div>
<div style="position:absolute;left:646.5px;width:800px;text-align:center;top:794.98px;font-size:14.2px;line-height:14.2px;font-weight:400;color:#3b82f6;white-space:nowrap;">--</div>
<div style="position:absolute;left:1117px;top:592px;width:755px;height:238px;background:#202b3a;border-radius:14px;"></div>
<div style="position:absolute;left:1126.6px;top:605.91px;font-size:15.7px;line-height:15.7px;font-weight:700;color:#f1f5f9;white-space:nowrap;">Device &amp; actions</div>
<div style="position:absolute;left:1127px;top:639px;width:363px;height:41px;background:#2c3a4e;border-radius:12px;"></div>
<div style="position:absolute;left:908.5px;width:800px;text-align:center;top:652.88px;font-size:15.5px;line-height:15.5px;font-weight:400;color:#f1f5f9;white-space:nowrap;">Export history</div>
<div style="position:absolute;left:1498px;top:639px;width:364px;height:41px;background:#2c3a4e;border-radius:12px;"></div>
<div style="position:absolute;left:1280px;width:800px;text-align:center;top:652.88px;font-size:15.5px;line-height:15.5px;font-weight:400;color:#f1f5f9;white-space:nowrap;">Clear history</div>
<div style="position:absolute;left:1128px;top:699px;width:733px;height:62px;background:#111820;border-radius:12px;"></div>
<div style="position:absolute;left:1137px;top:713.18px;font-size:15.5px;line-height:15.5px;font-weight:700;color:#f1f5f9;white-space:nowrap;">Switch</div>
<div style="position:absolute;left:1137px;top:733.69px;font-size:16.2px;line-height:16.2px;font-weight:400;color:#94a3b8;white-space:nowrap;">No switchable output detected for this device right now.</div>
</body></html>
